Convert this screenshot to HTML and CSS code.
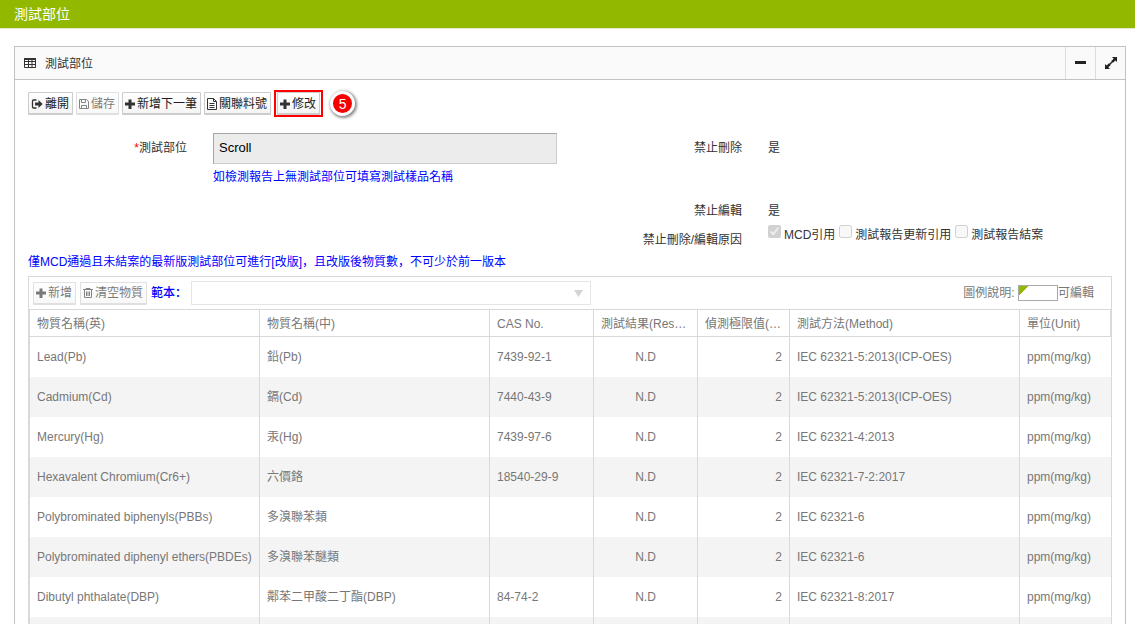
FILE: index.html
```html
<!DOCTYPE html>
<html lang="zh-Hant">
<head>
<meta charset="utf-8">
<title>測試部位</title>
<link rel="stylesheet" href="styles.css">
</head>
<body>
<header class="topbar"><h1>測試部位</h1></header>
<main class="panel">
  <div class="panel-head">
    <svg class="grid-icon" viewBox="0 0 12 10"><path d="M.5 1h11v8.500H.5zM.5 3.500h11M.5 6.500h11M4.500 1v8.500M8 1v8.500" fill="none" stroke="#333"/><path d="M0 0h12v2H0z" fill="#333"/></svg>
    <h2>測試部位</h2>
    <button class="tool" type="button" aria-label="收合"><svg viewBox="0 0 14 14"><path d="M1 5h11v3H1z" fill="#222"/></svg></button>
    <button class="tool" type="button" aria-label="展開"><svg viewBox="0 0 14 14"><path d="M8 1h5v5l-1.600-1.600-2.400 2.400-1.700-1.700 2.400-2.400zM6 13H1V8l1.600 1.600L5 7.200l1.700 1.700-2.400 2.400z" fill="#222"/><path d="M5 9l4-4" stroke="#222" stroke-width="1.500"/></svg></button>
  </div>
  <div class="panel-body">
    <div class="actions">
      <button class="btn exit" type="button"><svg viewBox="0 0 12 12"><path d="M5.500 2H2.500Q1.500 2 1.500 3v6q0 1 1 1h3" fill="none" stroke="#333" stroke-width="1.300"/><path d="M4 4.500h3.500V2l4.200 4-4.200 4V7.500H4z" fill="#333"/></svg>離開</button>
      <button class="btn" type="button" disabled><svg viewBox="0 0 10 12"><path d="M.5 1.500h7l2 2v7h-9zM2.500 1.500v3h4v-3M2.500 10.500v-3h5v3" fill="none" stroke="#333"/></svg>儲存</button>
      <button class="btn" type="button"><svg viewBox="0 0 10 12"><path d="M3.500 1.500h3v3H10v3H6.500v3.500h-3V7.500H0v-3h3.500z" fill="#333"/></svg>新增下一筆</button>
      <button class="btn" type="button"><svg viewBox="0 0 10 12"><path d="M.5.5h6l3 3v8h-9zM6.500.5v3h3M2.500 5.500h5M2.500 7.500h5M2.500 9.500h5" fill="none" stroke="#333"/></svg>關聯料號</button>
      <span class="highlight"><button class="btn" type="button"><svg viewBox="0 0 10 12"><path d="M3.500 1.500h3v3H10v3H6.500v3.500h-3V7.500H0v-3h3.500z" fill="#333"/></svg>修改</button></span>
      <span class="step">5</span>
    </div>
    <form class="form">
      <label class="label tall" for="part"><span class="required">*</span>測試部位</label>
      <div class="field"><input class="text" id="part" type="text" value="Scroll" readonly><p class="hint">如檢測報告上無測試部位可填寫測試樣品名稱</p></div>
      <span class="label tall">禁止刪除</span><span class="tall">是</span>
      <span class="label second">禁止編輯</span><span class="value">是</span>
      <span class="label second reason">禁止刪除/編輯原因</span>
      <div class="checks">
        <label><input type="checkbox" checked disabled>MCD引用</label>
        <label><input type="checkbox" disabled>測試報告更新引用</label>
        <label><input type="checkbox" disabled>測試報告結案</label>
      </div>
    </form>
    <p class="notice">僅MCD通過且未結案的最新版測試部位可進行[改版]<span class="mark" lang="zh-Hans">，</span>且改版後物質數<span class="mark" lang="zh-Hans">，</span>不可少於前一版本</p>
    <section class="grid">
      <div class="grid-tools">
        <button class="btn" type="button" disabled><svg viewBox="0 0 10 12"><path d="M3.500 1.500h3v3H10v3H6.500v3.500h-3V7.500H0v-3h3.500z" fill="#222"/></svg>新增</button>
        <button class="btn" type="button" disabled><svg viewBox="0 0 10 12"><path d="M0 2.500h10M3 2.500v-1h4v1M1.500 3v7.500h7V3M3.500 4.500v4.500M5 4.500v4.500M6.500 4.500v4.500" fill="none" stroke="#333"/></svg>清空物質</button>
        <label class="template" for="template">範本<span class="mark" lang="zh-Hans">：</span></label>
        <div class="select-wrap"><select id="template" disabled><option></option></select><svg viewBox="0 0 9 7"><path d="M0 0h9L4.500 7z" fill="#d4d4d4"/></svg></div>
        <span class="legend">圖例說明: <i></i>可編輯</span>
      </div>
      <table>
        <colgroup><col class="name"><col class="name"><col class="cas"><col class="cas"><col class="limit"><col class="name"><col></colgroup>
        <thead><tr><th>物質名稱(英)</th><th>物質名稱(中)</th><th>CAS No.</th><th>測試結果(Result)</th><th>偵測極限值(MDL)</th><th>測試方法(Method)</th><th>單位(Unit)</th></tr></thead>
        <tbody>
          <tr><td>Lead(Pb)</td><td>鉛(Pb)</td><td>7439-92-1</td><td>N.D</td><td>2</td><td>IEC 62321-5:2013(ICP-OES)</td><td>ppm(mg/kg)</td></tr>
          <tr><td>Cadmium(Cd)</td><td>鎘(Cd)</td><td>7440-43-9</td><td>N.D</td><td>2</td><td>IEC 62321-5:2013(ICP-OES)</td><td>ppm(mg/kg)</td></tr>
          <tr><td>Mercury(Hg)</td><td>汞(Hg)</td><td>7439-97-6</td><td>N.D</td><td>2</td><td>IEC 62321-4:2013</td><td>ppm(mg/kg)</td></tr>
          <tr><td>Hexavalent Chromium(Cr6+)</td><td>六價鉻</td><td>18540-29-9</td><td>N.D</td><td>2</td><td>IEC 62321-7-2:2017</td><td>ppm(mg/kg)</td></tr>
          <tr><td>Polybrominated biphenyls(PBBs)</td><td>多溴聯苯類</td><td></td><td>N.D</td><td>2</td><td>IEC 62321-6</td><td>ppm(mg/kg)</td></tr>
          <tr><td>Polybrominated diphenyl ethers(PBDEs)</td><td>多溴聯苯醚類</td><td></td><td>N.D</td><td>2</td><td>IEC 62321-6</td><td>ppm(mg/kg)</td></tr>
          <tr><td>Dibutyl phthalate(DBP)</td><td>鄰苯二甲酸二丁酯(DBP)</td><td>84-74-2</td><td>N.D</td><td>2</td><td>IEC 62321-8:2017</td><td>ppm(mg/kg)</td></tr>
          <tr><td></td><td></td><td></td><td></td><td></td><td></td><td></td></tr>
        </tbody>
      </table>
    </section>
  </div>
</main>
</body>
</html>
```

FILE: styles.css
```css
* { box-sizing: border-box; }
body, button, input, select { font-family: "Liberation Sans", "Noto Sans CJK TC", sans-serif; font-size: 12px; }
body { display: flex; flex-direction: column; margin: 0; height: 100vh; overflow: hidden; color: #333; line-height: 18px; background: #fff; }
h1, h2, p { margin: 0; font-weight: normal; }
svg { display: block; flex: none; }

.topbar { flex: none; height: 29px; padding: 0 14px; background: #92b900; border-bottom: 1px solid #e4e9d0; color: #fff; }
.topbar h1 { font-size: 14px; line-height: 28px; }

.panel { flex: 1; min-height: 0; overflow: hidden; margin: 17px 9px 0 14px; border: 1px solid #c2c2c2; border-bottom: 0; }
.panel-head { display: flex; align-items: center; height: 33px; background: #fafafa; border-bottom: 1px solid #c2c2c2; }
.grid-icon { width: 12px; height: 10px; margin: 0 9px; }
.panel-head h2 { flex: 1; font-size: 12px; line-height: 20px; padding-top: 1px; }
.tool { display: grid; place-items: center; width: 30px; height: 32px; padding: 0; border: 0; border-left: 1px solid #ddd; background: none; }
.tool svg { width: 14px; height: 14px; }

.panel-body { padding: 9px 13px 0; }
.actions { display: flex; align-items: center; gap: 3px; height: 29px; }
.btn { display: flex; align-items: center; gap: 2px; height: 23px; padding: 1px 3px 0 2px; border: 1px solid #ccc; border-bottom-width: 2px; border-radius: 1px; background: linear-gradient(#fff, #f5f5f5); color: #222; line-height: 18px; white-space: nowrap; }
.btn svg { width: 10px; height: 12px; }
.exit svg { width: 12px; }
.btn:disabled { opacity: .6; }
.highlight { padding: 0 1px; border: 2px solid #f00; }
.step { display: grid; place-items: center; width: 25px; height: 25px; margin-left: 4px; border: 3px solid #fff; border-radius: 50%; background: #f60000; box-shadow: 1px 1px 3px 1px #888; color: #fff; font-size: 14px; }

.form { display: grid; grid-template-columns: 159fr 344fr 159fr 344fr; column-gap: 26px; margin-top: 15px; }
.label { text-align: right; }
.tall { line-height: 30px; }
.required { color: #f00; }
.field { height: 69px; }
.text { display: block; width: 100%; height: 31px; padding: 0 5px 2px; border: 1px solid #ccc; border-top-color: #a5a5a5; border-left-color: #a5a5a5; border-radius: 0; background: #ececec; color: #000; font-size: 13px; outline: 0; }
.hint, .notice { color: #00f; }
.hint { margin-top: 4px; }
.second { grid-column: 3; }
.value { margin-bottom: 4px; }
.reason { margin-top: 7px; }
.checks { display: flex; gap: 4px; padding-top: 1px; white-space: nowrap; }
.checks label { display: flex; gap: 3px; height: 18px; line-height: 20px; }
.checks input { width: 13px; height: 13px; margin: 0; }
.notice { margin-top: 4px; }
.mark { font-family: "Noto Sans CJK SC", sans-serif; line-height: 1; }

.grid { margin-top: 5px; border: 1px solid #d9d9d9; color: #777; }
.grid-tools { display: flex; align-items: center; gap: 4px; height: 32px; padding: 0 17px 0 4px; }
.template { color: #00f; font-weight: 500; }
.select-wrap { display: grid; align-items: center; width: 400px; }
.select-wrap > * { grid-area: 1 / 1; }
.select-wrap svg { z-index: 1; width: 9px; height: 7px; margin-right: 8px; justify-self: end; pointer-events: none; }
select { appearance: none; width: 100%; height: 24px; border: 1px solid #e5e5e5; background: #fff; opacity: 1; }
.legend { display: flex; align-items: center; margin-left: auto; white-space: pre; }
.legend i { width: 40px; height: 16px; border: 1px solid #aaa; background: linear-gradient(135deg, #92b900 7px, transparent 7px); }

table { width: 100%; table-layout: fixed; border-collapse: separate; border-spacing: 0; border-left: 1px solid #d9d9d9; }
.name { width: 230px; }
.cas { width: 104px; }
.limit { width: 92px; }
th, td { padding: 0 7px; border-right: 1px solid #d9d9d9; overflow: hidden; text-overflow: ellipsis; white-space: nowrap; text-align: left; font-weight: normal; }
th { height: 28px; padding: 2px 7px 0; border-top: 1px solid #d9d9d9; border-bottom: 1px solid #d9d9d9; }
td { height: 40px; }
td:last-child { border-right: 0; }
td:nth-child(4) { text-align: center; }
td:nth-child(5) { text-align: right; }
tbody tr:nth-child(even) { background: #f4f4f4; }
```
